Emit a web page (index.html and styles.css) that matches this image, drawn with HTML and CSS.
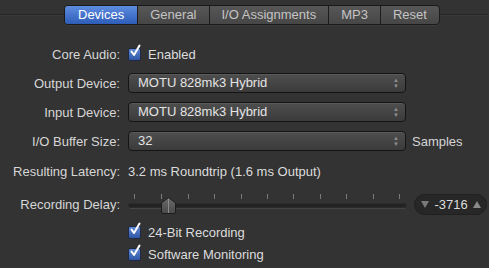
FILE: index.html
```html
<!DOCTYPE html>
<html lang="en">
<head>
    <meta charset="UTF-8">
    <title>Audio Preferences</title>
    <link rel="stylesheet" href="styles.css">
</head>
<body>
    <div class="header">
        <div class="tabs">
            <span class="tab active">Devices</span>
            <span class="tab">General</span>
            <span class="tab">I/O Assignments</span>
            <span class="tab">MP3</span>
            <span class="tab">Reset</span>
        </div>
    </div>

    <div class="form">
        <div class="row r-core">
            <span class="label">Core Audio:</span>
            <span class="check">
                <svg width="14" height="14" viewBox="0 0 14 14"><path d="M3.5 6.5 L6 10 L11.5 0.5" /></svg>
            </span>
            <span class="value">Enabled</span>
        </div>
        <div class="row r-out">
            <span class="label">Output Device:</span>
            <div class="select">MOTU 828mk3 Hybrid<span class="arrows">&#9650;<br>&#9660;</span></div>
        </div>
        <div class="row r-in">
            <span class="label">Input Device:</span>
            <div class="select">MOTU 828mk3 Hybrid<span class="arrows">&#9650;<br>&#9660;</span></div>
        </div>
        <div class="row r-buf">
            <span class="label">I/O Buffer Size:</span>
            <div class="select">32<span class="arrows">&#9650;<br>&#9660;</span></div>
            <span class="unit">Samples</span>
        </div>
        <div class="row r-lat">
            <span class="label">Resulting Latency:</span>
            <span class="value">3.2 ms Roundtrip (1.6 ms Output)</span>
        </div>
        <div class="row r-delay">
            <span class="label">Recording Delay:</span>
            <svg class="slider" width="280" height="22" viewBox="0 0 280 22">
                <g stroke="#7a7a7a" stroke-width="1">
                    <line x1="6.5" y1="1" x2="6.5" y2="6"/>
                    <line x1="33.5" y1="1" x2="33.5" y2="6"/>
                    <line x1="60.5" y1="1" x2="60.5" y2="6"/>
                    <line x1="86.5" y1="1" x2="86.5" y2="6"/>
                    <line x1="113.5" y1="1" x2="113.5" y2="6"/>
                    <line x1="139.5" y1="1" x2="139.5" y2="6"/>
                    <line x1="165.5" y1="1" x2="165.5" y2="6"/>
                    <line x1="192.5" y1="1" x2="192.5" y2="6"/>
                    <line x1="218.5" y1="1" x2="218.5" y2="6"/>
                    <line x1="245.5" y1="1" x2="245.5" y2="6"/>
                    <line x1="271.5" y1="1" x2="271.5" y2="6"/>
                </g>
                <rect x="0.5" y="10.5" width="278" height="4" rx="2" fill="#232323" stroke="#2a2a2a"/>
                <line x1="2" y1="15.5" x2="277" y2="15.5" stroke="#444" />
                <defs>
                    <linearGradient id="thumb" x1="0" y1="0" x2="0" y2="1">
                        <stop offset="0" stop-color="#6a6a6a"/>
                        <stop offset="1" stop-color="#4a4a4a"/>
                    </linearGradient>
                </defs>
                <path d="M40.5 4.5 L47.5 10 L47.5 19 Q47.5 20.5 46 20.5 L35 20.5 Q33.5 20.5 33.5 19 L33.5 10 Z" fill="url(#thumb)" stroke="#1c1c1c"/>
                <line x1="40.5" y1="6" x2="40.5" y2="20" stroke="#8a8a8a"/>
            </svg>
            <div class="stepper"><span class="tri down"></span>-3716<span class="tri up"></span></div>
        </div>
        <div class="row r-bit">
            <span class="label"></span>
            <span class="check">
                <svg width="14" height="14" viewBox="0 0 14 14"><path d="M3.5 6.5 L6 10 L11.5 0.5" /></svg>
            </span>
            <span class="value">24-Bit Recording</span>
        </div>
        <div class="row r-mon">
            <span class="label"></span>
            <span class="check">
                <svg width="14" height="14" viewBox="0 0 14 14"><path d="M3.5 6.5 L6 10 L11.5 0.5" /></svg>
            </span>
            <span class="value">Software Monitoring</span>
        </div>
    </div>
</body>
</html>
```
FILE: styles.css
```css
body { margin: 0; background: #333333; font-family: "Liberation Sans", Arial, sans-serif; font-size: 13px; color: #d6d6d6; }

.header { height: 30px; padding-top: 5px; box-sizing: border-box; background: linear-gradient(to bottom, transparent 14px, #262626 14px, #262626 15px, #3a3a3a 15px, #3a3a3a 16px, transparent 16px); }
.tabs { display: inline-flex; margin-left: 64px; height: 20px; border: 1px solid #1a1a1a; border-radius: 4px; overflow: hidden; box-sizing: border-box; background: linear-gradient(#575757, #464646); box-shadow: 0 1px 0 #3d3d3d; }
.tab { padding: 0 12px; line-height: 18px; color: #c4c4c4; border-left: 1px solid #1c1c1c; }
.tab:first-child { border-left: none; }
.tab.active { color: #fff; background: linear-gradient(#5d8ce0, #2e5db8); padding: 0 13px; }

.form { display: flex; flex-direction: column; }
.row { display: flex; align-items: center; height: 20px; }
.label { width: 120px; text-align: right; margin-right: 8px; flex: none; }
.value { color: #dcdcdc; }

.r-core { margin-top: 14px; }
.r-out { margin-top: 9px; }
.r-in, .r-buf { margin-top: 9px; }
.r-lat { margin-top: 10px; }
.r-delay { margin-top: 12px; height: 22px; }
.r-bit { margin-top: 7px; }
.r-mon { margin-top: 2px; }

.check { width: 13px; height: 13px; box-sizing: border-box; border: 1px solid #1e2a44; border-radius: 2px; background: linear-gradient(#5f86cf, #2f57a6); margin-right: 7px; position: relative; }
.check svg { position: absolute; left: -1px; top: -4px; overflow: visible; }
.check path { fill: none; stroke: #fff; stroke-width: 2; stroke-linecap: round; stroke-linejoin: round; }

.select { width: 278px; height: 20px; box-sizing: border-box; border: 1px solid #141414; border-radius: 4px; background: linear-gradient(#4e4e4e, #3b3b3b); color: #e4e4e4; padding-left: 9px; line-height: 18px; position: relative; box-shadow: inset 0 1px 0 #5a5a5a; }
.arrows { position: absolute; right: 6px; top: 3px; font-size: 6px; line-height: 6px; color: #8e8e8e; text-align: center; }
.unit { margin-left: 6px; }

.slider { flex: none; display: block; }
.stepper { margin-left: 6px; width: 73px; height: 21px; box-sizing: border-box; border-radius: 11px; background: #272727; border: 1px solid #202020; display: flex; align-items: center; justify-content: space-between; padding: 0 5px 0 6px; color: #dcdcdc; font-size: 13px; }
.tri { width: 0; height: 0; border-left: 4px solid transparent; border-right: 4px solid transparent; }
.tri.down { border-top: 7px solid #7a7a7a; }
.tri.up { border-bottom: 7px solid #8a8a8a; }
```
